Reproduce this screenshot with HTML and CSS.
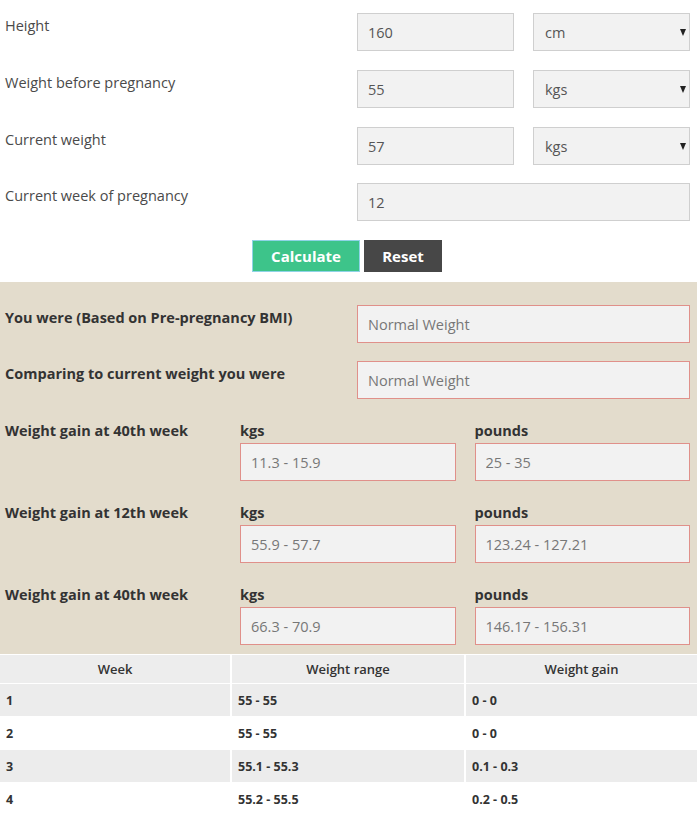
FILE: index.html
```html
<!DOCTYPE html>
<html lang="en">
<head>
    <meta charset="UTF-8">
    <title>Pregnancy Weight Gain Calculator</title>
    <link rel="stylesheet" href="styles.css">
</head>
<body>
    <div class="calc">
        <form class="calc-form">
            <div class="form-row">
                <label class="form-label">Height</label>
                <div class="form-fields">
                    <input class="field" type="text" value="160">
                    <div class="select-wrap">
                        <select class="field">
                            <option>cm</option>
                            <option>inches</option>
                        </select>
                    </div>
                </div>
            </div>
            <div class="form-row">
                <label class="form-label">Weight before pregnancy</label>
                <div class="form-fields">
                    <input class="field" type="text" value="55">
                    <div class="select-wrap">
                        <select class="field">
                            <option>kgs</option>
                            <option>pounds</option>
                        </select>
                    </div>
                </div>
            </div>
            <div class="form-row">
                <label class="form-label">Current weight</label>
                <div class="form-fields">
                    <input class="field" type="text" value="57">
                    <div class="select-wrap">
                        <select class="field">
                            <option>kgs</option>
                            <option>pounds</option>
                        </select>
                    </div>
                </div>
            </div>
            <div class="form-row">
                <label class="form-label">Current week of pregnancy</label>
                <div class="form-fields single">
                    <input class="field" type="text" value="12">
                </div>
            </div>
            <div class="actions">
                <button type="button" class="btn btn-calc">Calculate</button>
                <button type="button" class="btn btn-reset">Reset</button>
            </div>
        </form>

        <div class="results">
            <div class="result-row">
                <span class="result-label">You were (Based on Pre-pregnancy BMI)</span>
                <input class="field result-field" type="text" value="Normal Weight" readonly>
            </div>
            <div class="result-row">
                <span class="result-label">Comparing to current weight you were</span>
                <input class="field result-field" type="text" value="Normal Weight" readonly>
            </div>

            <div class="gain-row">
                <span class="result-label">Weight gain at 40th week</span>
                <div class="gain-col">
                    <span class="gain-unit">kgs</span>
                    <input class="field result-field" type="text" value="11.3 - 15.9" readonly>
                </div>
                <div class="gain-col">
                    <span class="gain-unit">pounds</span>
                    <input class="field result-field" type="text" value="25 - 35" readonly>
                </div>
            </div>
            <div class="gain-row">
                <span class="result-label">Weight gain at 12th week</span>
                <div class="gain-col">
                    <span class="gain-unit">kgs</span>
                    <input class="field result-field" type="text" value="55.9 - 57.7" readonly>
                </div>
                <div class="gain-col">
                    <span class="gain-unit">pounds</span>
                    <input class="field result-field" type="text" value="123.24 - 127.21" readonly>
                </div>
            </div>
            <div class="gain-row">
                <span class="result-label">Weight gain at 40th week</span>
                <div class="gain-col">
                    <span class="gain-unit">kgs</span>
                    <input class="field result-field" type="text" value="66.3 - 70.9" readonly>
                </div>
                <div class="gain-col">
                    <span class="gain-unit">pounds</span>
                    <input class="field result-field" type="text" value="146.17 - 156.31" readonly>
                </div>
            </div>
        </div>

        <table class="week-table">
            <thead>
                <tr>
                    <th>Week</th>
                    <th>Weight range</th>
                    <th>Weight gain</th>
                </tr>
            </thead>
            <tbody>
                <tr><td>1</td><td>55 - 55</td><td>0 - 0</td></tr>
                <tr><td>2</td><td>55 - 55</td><td>0 - 0</td></tr>
                <tr><td>3</td><td>55.1 - 55.3</td><td>0.1 - 0.3</td></tr>
                <tr><td>4</td><td>55.2 - 55.5</td><td>0.2 - 0.5</td></tr>
            </tbody>
        </table>
    </div>
</body>
</html>
```

FILE: styles.css
```css
body {
    margin: 0;
    font-family: 'Open Sans', 'Liberation Sans', sans-serif;
    font-size: 14.5px;
    color: #444;
    background: #fff;
}

.calc {
    width: 697px;
}

/* Input form */
.calc-form {
    padding: 13px 7px 10px 0;
    display: flex;
    flex-direction: column;
    gap: 19px;
}

.form-row {
    display: flex;
}

.form-label {
    width: 352px;
    padding: 3px 0 0 5px;
    line-height: 20px;
    color: #4a4a4a;
}

.form-fields {
    flex: 1;
    display: grid;
    grid-template-columns: 1fr 1fr;
    gap: 19px;
}

.form-fields.single {
    grid-template-columns: 1fr;
}

.form-row:nth-child(4) {
    margin-top: -1px;
}

.field {
    box-sizing: border-box;
    width: 100%;
    height: 38px;
    margin: 0;
    padding: 0 10px;
    border: 1px solid #cfcfcf;
    background: #f2f2f2;
    font-family: inherit;
    font-size: 14.5px;
    color: #555;
    outline: none;
    border-radius: 0;
}

select.field {
    appearance: none;
    -webkit-appearance: none;
    padding-left: 11px;
}

.select-wrap {
    position: relative;
}

.select-wrap::after {
    content: "";
    position: absolute;
    right: 4px;
    top: 16px;
    border-left: 3.5px solid transparent;
    border-right: 3.5px solid transparent;
    border-top: 7px solid #222;
    pointer-events: none;
}

.actions {
    display: flex;
    justify-content: center;
    gap: 4px;
    padding-left: 4px;
}

.btn {
    height: 32px;
    border: none;
    font-family: inherit;
    font-size: 15px;
    font-weight: bold;
    color: #fff;
    cursor: pointer;
}

.btn-calc {
    width: 108px;
    background: #3dc48a;
    border: 1px solid #8fd3e6;
}

.btn-reset {
    width: 78px;
    background: #474747;
}

/* Results */
.results {
    background: #e3dccc;
    padding: 23px 7px 9px 0;
}

.result-row {
    display: flex;
    margin-bottom: 18px;
}

.result-label {
    width: 352px;
    padding: 4px 0 0 5px;
    line-height: 18px;
    font-weight: bold;
    color: #333;
}

.result-field {
    flex: 1;
    border-color: #e0908a;
    color: #777;
}

.gain-row {
    display: flex;
    gap: 19px;
    margin-top: 23px;
}

.result-row + .gain-row {
    margin-top: 23px;
}

.gain-row .result-label {
    width: 235px;
    padding-top: 0;
    margin-right: -19px;
}

.gain-col {
    flex: 1;
    display: flex;
    flex-direction: column;
    gap: 3px;
}

.gain-col .result-field {
    flex: none;
}

.gain-unit {
    font-weight: bold;
    line-height: 18px;
    color: #333;
}

/* Week table */
.week-table {
    width: 100%;
    margin-top: 1px;
    border-collapse: collapse;
    table-layout: fixed;
    font-size: 12.5px;
    color: #333;
}

.week-table th,
.week-table td {
    border-left: 2px solid #fff;
    border-bottom: 1px solid #fff;
}

.week-table th:first-child,
.week-table td:first-child {
    border-left: none;
    width: 228px;
}

.week-table th {
    height: 26px;
    background: #ededed;
    text-align: center;
    font-size: 13px;
    font-weight: 600;
}

.week-table td {
    height: 32px;
    padding: 0 6px;
    font-weight: bold;
}

.week-table th:nth-child(2) {
    width: 230px;
}

.week-table tbody tr:nth-child(odd) {
    background: #ececec;
}
```
